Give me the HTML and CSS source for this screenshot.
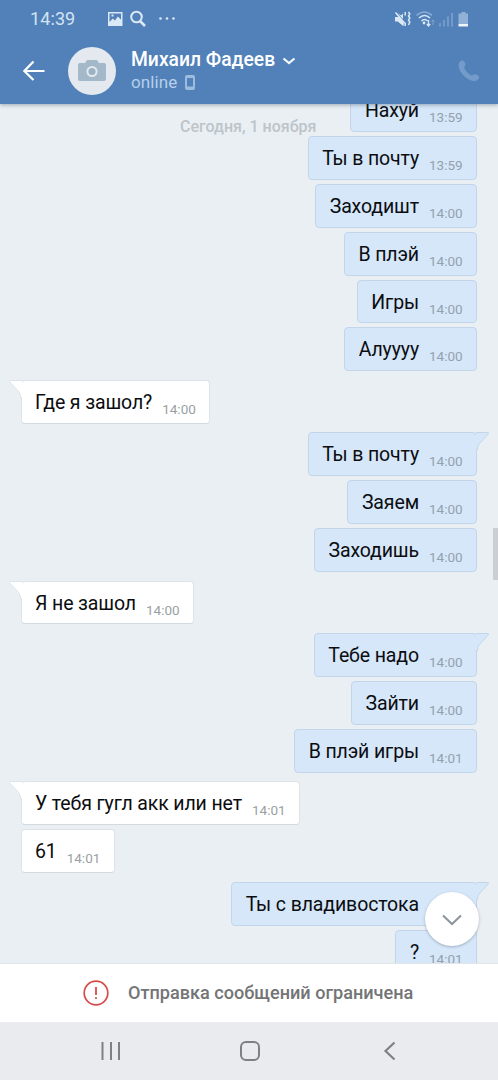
FILE: index.html
```html
<!DOCTYPE html>
<html lang="ru">
<head>
<meta charset="utf-8">
<title>Михаил Фадеев</title>
<link rel="stylesheet" href="styles.css">
</head>
<body>
<div class="screen">
  <header class="header">
    <div class="status">
      <span class="clock">14:39</span>
      <svg class="status-left" width="70" height="20" viewBox="0 0 70 20">
        <path fill="#dbe8f6" fill-rule="evenodd" d="M1 3h14.500v14H1zM2.500 4.500v8.500l3.300-3.500 2.200 2 2.800-4 3.200 3V4.500zM4.500 5.500h2v2h-2z"/>
        <circle cx="29.500" cy="8" r="5.300" fill="none" stroke="#dbe8f6" stroke-width="2"/>
        <path d="M33 12l5 5" stroke="#dbe8f6" stroke-width="2.600"/>
        <g fill="#dbe8f6"><circle cx="53.500" cy="9.500" r="1.300"/><circle cx="60" cy="9.500" r="1.300"/><circle cx="66.500" cy="9.500" r="1.300"/></g>
      </svg>
      <svg class="status-right" width="76" height="20" viewBox="0 0 76 20">
        <path fill="#dbe8f6" d="M1 8h3v4H1zM4.500 7.500L9.500 13v4l-5-4zM3.500 4l5.500 6V4.500L7 6.500z"/>
        <path fill="#dbe8f6" d="M1 8h3.500l5 5.500V17L4 12.500H1z"/>
        <path d="M1.500 3.500l9 10.500M11.200 3v3.500M11.200 13.500V17M14.500 3l1.300 2-1.300 2 1.300 2-1.300 2 1.300 2-1.300 3" fill="none" stroke="#dbe8f6" stroke-width="1.500"/>
        <path d="M22.500 6.500q8-7 15.500 0" fill="none" stroke="#8aacd5" stroke-width="1.500"/>
        <path d="M25 9q5.500-5 11 0M27.500 12q3-3 6 0" fill="none" stroke="#dbe8f6" stroke-width="1.600"/>
        <circle cx="30" cy="14" r="1.400" fill="#dbe8f6"/>
        <path d="M34.500 11v6M32.800 15l1.700 2 1.700-2" fill="none" stroke="#dbe8f6" stroke-width="1.300"/>
        <path d="M39 16v-5M37.500 12.500L39 11l1.500 1.500" fill="none" stroke="#7fa4cf"/>
        <path d="M46 14v3.500M50 11v6.500M54 7.500v10M58 4v13.500" stroke="#7fa4cf" stroke-width="1.500"/>
        <path fill="#92b1d7" d="M64.500 4.500h3V3h4v1.500H74V15H64.500z"/>
        <path fill="#f0f5fb" d="M64.500 15H74v2.500h-9.500z"/>
      </svg>
    </div>
    <div class="toolbar">
      <svg class="back" width="24" height="24" viewBox="0 0 24 24"><path d="M22.500 12H2.500M11.500 2.500L2.300 12l9.200 9" fill="none" stroke="#fff" stroke-width="2.200"/></svg>
      <div class="avatar">
        <svg width="28" height="22" viewBox="0 0 28 22"><path fill="#a3b8c8" d="M2 3h5l2-3h10l2 3h5q2 0 2 2v14q0 2-2 2H2q-2 0-2-2V5q0-2 2-2z"/><circle cx="14" cy="11.500" r="4.600" fill="#9db2c2" stroke="#e3e9ee" stroke-width="2"/></svg>
      </div>
      <div class="person">
        <div class="name">Михаил Фадеев <svg width="14" height="9" viewBox="0 0 14 9"><path d="M1.500 2.500L7 7 12.500 2.500" fill="none" stroke="#f4f8fc" stroke-width="2.200"/></svg></div>
        <div class="presence">online <svg width="10" height="15" viewBox="0 0 10 15"><path fill="#9dbce0" fill-rule="evenodd" d="M2 0h6q2 0 2 2v11q0 2-2 2H2q-2 0-2-2V2q0-2 2-2zM2 3v8.500h6V3z"/></svg></div>
      </div>
      <svg class="call" width="22" height="22" viewBox="0 0 22 22"><path fill="#749cca" d="M3.300.8c1.600-.8 3.200.5 3.900 2.400.7 2-.3 3.400-1.200 4.300 1.200 3.300 4.400 6.500 8.100 8.200 1.600-1.600 3.100-1.700 5.100-.7 2.300 1.200 2.400 2.700 1.300 4.100-1.700 2.200-4.800 2.500-8.500.8C6 17.200 1.600 12 .7 6.500.3 4 1.100 1.900 3.300.8z"/></svg>
    </div>
  </header>

  <main class="chat">
    <div class="date">Сегодня, 1 ноября</div>
    <div class="group out">
      <div class="msg">Нахуй<time>13:59</time></div>
      <div class="msg">Ты в почту<time>13:59</time></div>
      <div class="msg">Заходишт<time>14:00</time></div>
      <div class="msg">В плэй<time>14:00</time></div>
      <div class="msg">Игры<time>14:00</time></div>
      <div class="msg">Алуууу<time>14:00</time></div>
    </div>
    <div class="group in">
      <div class="msg"><svg class="tail" width="13" height="18" viewBox="0 0 13 18"><path class="fill" d="M13 .5H.8Q0 .8.800 2L10 12q1.500 2 1.500 5H13z"/><path class="edge" d="M13 .5H.8Q0 .8.800 2L10 12q1.500 2 1.500 6"/></svg>Где я зашол?<time>14:00</time></div>
    </div>
    <div class="group out">
      <div class="msg"><svg class="tail" width="13" height="18" viewBox="0 0 13 18"><path class="fill" d="M13 .5H.8Q0 .8.800 2L10 12q1.500 2 1.500 5H13z"/><path class="edge" d="M13 .5H.8Q0 .8.800 2L10 12q1.500 2 1.500 6"/></svg>Ты в почту<time>14:00</time></div>
      <div class="msg">Заяем<time>14:00</time></div>
      <div class="msg">Заходишь<time>14:00</time></div>
    </div>
    <div class="group in">
      <div class="msg"><svg class="tail" width="13" height="18" viewBox="0 0 13 18"><path class="fill" d="M13 .5H.8Q0 .8.800 2L10 12q1.500 2 1.500 5H13z"/><path class="edge" d="M13 .5H.8Q0 .8.800 2L10 12q1.500 2 1.500 6"/></svg>Я не зашол<time>14:00</time></div>
    </div>
    <div class="group out">
      <div class="msg"><svg class="tail" width="13" height="18" viewBox="0 0 13 18"><path class="fill" d="M13 .5H.8Q0 .8.800 2L10 12q1.500 2 1.500 5H13z"/><path class="edge" d="M13 .5H.8Q0 .8.800 2L10 12q1.500 2 1.500 6"/></svg>Тебе надо<time>14:00</time></div>
      <div class="msg">Зайти<time>14:00</time></div>
      <div class="msg">В плэй игры<time>14:01</time></div>
    </div>
    <div class="group in">
      <div class="msg"><svg class="tail" width="13" height="18" viewBox="0 0 13 18"><path class="fill" d="M13 .5H.8Q0 .8.800 2L10 12q1.500 2 1.500 5H13z"/><path class="edge" d="M13 .5H.8Q0 .8.800 2L10 12q1.500 2 1.500 6"/></svg>У тебя гугл акк или нет<time>14:01</time></div>
      <div class="msg">61<time>14:01</time></div>
    </div>
    <div class="group out">
      <div class="msg"><svg class="tail" width="13" height="18" viewBox="0 0 13 18"><path class="fill" d="M13 .5H.8Q0 .8.800 2L10 12q1.500 2 1.500 5H13z"/><path class="edge" d="M13 .5H.8Q0 .8.800 2L10 12q1.500 2 1.500 6"/></svg>Ты с владивостока<time></time></div>
      <div class="msg">?<time>14:01</time></div>
    </div>
    <div class="scrollbar"></div>
    <div class="to-bottom"><svg width="20" height="12" viewBox="0 0 20 12"><path d="M1 1.500l9 8.500 9-8.500" fill="none" stroke="#8c949c" stroke-width="2"/></svg></div>
  </main>

  <div class="notice">
    <svg width="26" height="26" viewBox="0 0 26 26"><circle cx="13" cy="13" r="11.800" fill="none" stroke="#d64b4b" stroke-width="1.700"/><path d="M13 7v8" stroke="#d64b4b" stroke-width="1.800"/><circle cx="13" cy="18" r="1.100" fill="#d64b4b"/></svg>
    <span>Отправка сообщений ограничена</span>
  </div>
  <nav class="navbar">
    <svg width="20" height="20" viewBox="0 0 20 20"><path d="M2.500 1v18M11 1v18M19 1v18" stroke="#7e8084" stroke-width="2"/></svg>
    <svg width="20" height="20" viewBox="0 0 20 20"><rect x="1" y="1" width="18" height="18" rx="5" fill="none" stroke="#7e8084" stroke-width="2"/></svg>
    <svg width="20" height="20" viewBox="0 0 20 20"><path d="M14.500 1.500L5.500 10l9 8.500" fill="none" stroke="#7e8084" stroke-width="2.200"/></svg>
  </nav>
</div>
</body>
</html>
```
FILE: styles.css
```css
* { box-sizing: border-box; }
body { margin: 0; font-family: Roboto, "Noto Sans", sans-serif; }
svg { display: block; flex: none; }
.screen { width: 498px; height: 1080px; display: flex; flex-direction: column; overflow: hidden; background: #eaeff3; }
.header { height: 104px; flex: none; background: #5181b8; position: relative; z-index: 2; box-shadow: 0 1px 4px rgba(60, 80, 100, .45); }
.status { height: 38px; display: flex; align-items: center; padding: 0 28px 0 30px; color: #d3e3f4; }
.clock { font-size: 18px; line-height: 20px; width: 77px; letter-spacing: .1px; }
.status-right { margin-left: auto; }
.toolbar { height: 66px; display: flex; align-items: center; padding: 0 18px 0 22px; }
.avatar { width: 48px; height: 48px; border-radius: 50%; background: #e3e9ee; margin-left: 22px; display: flex; align-items: center; justify-content: center; }
.person { margin-left: 15px; flex: 1; }
.name { display: flex; align-items: center; gap: 7px; color: #fff; font-size: 19.300px; font-weight: 500; line-height: 22px; white-space: nowrap; }
.presence { display: flex; align-items: center; gap: 8px; color: #b7cfeb; font-size: 17px; line-height: 22px; letter-spacing: .1px; }
.chat { flex: 1; min-height: 0; position: relative; overflow: hidden; display: flex; flex-direction: column; gap: 8.800px; padding: 0 21px 0 20.500px; }
.date { position: absolute; left: 180px; top: 13px; font-size: 16px; line-height: 19px; font-weight: 500; color: #bdc4ca; white-space: nowrap; }
.group { display: flex; flex-direction: column; gap: 4px; align-items: flex-start; flex: none; }
.group.out { align-items: flex-end; }
.group:nth-child(2) { margin-top: -15.700px; }
.msg { position: relative; height: 43.800px; display: flex; gap: 10px; padding: 0 13px 0 13.500px; border-radius: 4px; font-size: 19.500px; letter-spacing: -.12px; line-height: 43px; color: #0b0d10; white-space: nowrap; background: #fff; border: 1px solid #dde3e8; border-bottom-color: #d2d9df; }
.out .msg { background: #d6e7f9; border-color: #c3d5e8; }
time { width: 34px; font-size: 13.500px; line-height: 56px; color: #999fa4; letter-spacing: 0; }
.out time { color: #93a1af; }
.tail { position: absolute; left: -12.500px; top: -1px; }
.out .tail { left: auto; right: -12.500px; transform: scaleX(-1); }
.tail .fill { fill: #fff; }
.tail .edge { fill: none; stroke: #dde3e8; }
.out .tail .fill { fill: #d6e7f9; }
.out .tail .edge { stroke: #c3d5e8; }
.scrollbar { position: absolute; right: 0; top: 424px; width: 5px; height: 52px; background: #cbcfd3; }
.to-bottom { position: absolute; left: 425px; top: 788px; width: 54px; height: 54px; border-radius: 50%; background: #fff; box-shadow: 0 1px 3px rgba(50, 70, 90, .35); display: flex; align-items: center; justify-content: center; padding-top: 2px; }
.notice { height: 59px; flex: none; background: #fff; display: flex; align-items: center; gap: 19px; padding-left: 83px; border-top: 1px solid #e1e6ea; color: #727476; font-size: 18.100px; line-height: 22px; font-weight: 500; white-space: nowrap; }
.navbar { height: 58px; flex: none; background: #eaebef; display: flex; align-items: center; justify-content: space-between; padding: 0 98px 0 100px; }
```
